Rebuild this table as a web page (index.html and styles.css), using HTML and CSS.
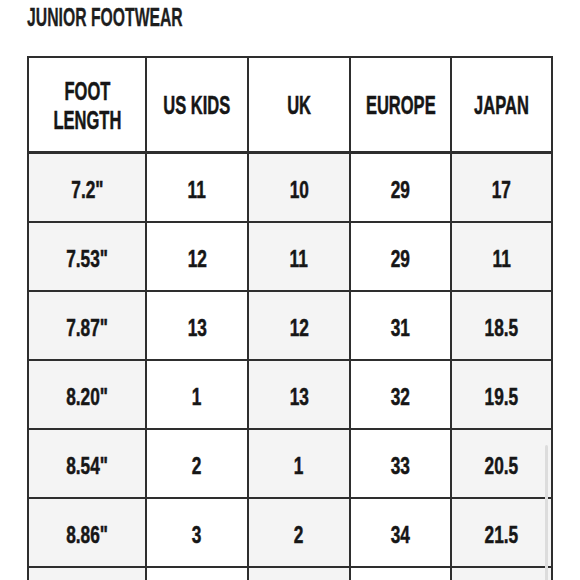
FILE: index.html
```html
<!DOCTYPE html>
<html lang="en">
<head>
<meta charset="utf-8">
<title>Junior Footwear</title>
<link rel="stylesheet" href="styles.css">
</head>
<body>
<div class="page">
  <h1 class="title"><span class="cond">JUNIOR FOOTWEAR</span></h1>
  <div class="chart">
    <div class="cell head"><span class="cond">FOOT<br>LENGTH</span></div>
    <div class="cell head"><span class="cond">US KIDS</span></div>
    <div class="cell head"><span class="cond">UK</span></div>
    <div class="cell head"><span class="cond">EUROPE</span></div>
    <div class="cell head"><span class="cond">JAPAN</span></div>

    <div class="cell shade"><span class="cond">7.2"</span></div>
    <div class="cell"><span class="cond">11</span></div>
    <div class="cell shade"><span class="cond">10</span></div>
    <div class="cell"><span class="cond">29</span></div>
    <div class="cell shade"><span class="cond">17</span></div>

    <div class="cell shade"><span class="cond">7.53"</span></div>
    <div class="cell"><span class="cond">12</span></div>
    <div class="cell shade"><span class="cond">11</span></div>
    <div class="cell"><span class="cond">29</span></div>
    <div class="cell shade"><span class="cond">11</span></div>

    <div class="cell shade"><span class="cond">7.87"</span></div>
    <div class="cell"><span class="cond">13</span></div>
    <div class="cell shade"><span class="cond">12</span></div>
    <div class="cell"><span class="cond">31</span></div>
    <div class="cell shade"><span class="cond">18.5</span></div>

    <div class="cell shade"><span class="cond">8.20"</span></div>
    <div class="cell"><span class="cond">1</span></div>
    <div class="cell shade"><span class="cond">13</span></div>
    <div class="cell"><span class="cond">32</span></div>
    <div class="cell shade"><span class="cond">19.5</span></div>

    <div class="cell shade"><span class="cond">8.54"</span></div>
    <div class="cell"><span class="cond">2</span></div>
    <div class="cell shade"><span class="cond">1</span></div>
    <div class="cell"><span class="cond">33</span></div>
    <div class="cell shade"><span class="cond">20.5</span></div>

    <div class="cell shade"><span class="cond">8.86"</span></div>
    <div class="cell"><span class="cond">3</span></div>
    <div class="cell shade"><span class="cond">2</span></div>
    <div class="cell"><span class="cond">34</span></div>
    <div class="cell shade"><span class="cond">21.5</span></div>

    <div class="cell shade"></div>
    <div class="cell"></div>
    <div class="cell shade"></div>
    <div class="cell"></div>
    <div class="cell shade"></div>
  </div>
  <div class="scroll-thumb"></div>
</div>
</body>
</html>
```

FILE: styles.css
```css
html, body {
  margin: 0;
  padding: 0;
  background: #fff;
}

.page {
  position: relative;
  width: 580px;
  height: 580px;
  overflow: hidden;
  padding-left: 27px;
  box-sizing: border-box;
  font-family: "Liberation Sans", Arial, sans-serif;
  color: #161616;
}

.title {
  margin: 0;
  padding-top: 2px;
  height: 54px;
  font-size: 25px;
  font-weight: bold;
  line-height: 30px;
  color: #1e1e1e;
}

.cond {
  display: inline-block;
  white-space: nowrap;
  transform: scaleX(0.72);
  -webkit-text-stroke: 0.5px currentColor;
}

.title .cond {
  transform: scaleX(0.63);
  transform-origin: left center;
  -webkit-text-stroke: 0.3px currentColor;
}

.chart {
  display: grid;
  grid-template-columns: 116px 100px 100px 99px 99px;
  grid-auto-rows: 67px;
  grid-template-rows: 94px;
  gap: 2px;
  padding: 2px;
  width: max-content;
  background: #2e2e2e;
}

.cell {
  display: flex;
  align-items: center;
  justify-content: center;
  text-align: center;
  background: #fff;
  font-size: 24px;
  font-weight: bold;
  line-height: 28px;
  padding-top: 4px;
  box-sizing: border-box;
}

.head {
  font-size: 25px;
  line-height: 29px;
  border-bottom: 1px solid #2e2e2e;
  padding-top: 2px;
}

.head .cond {
  transform: scaleX(0.66);
}

.shade {
  background: #f4f4f4;
}

.scroll-thumb {
  position: absolute;
  left: 545px;
  top: 445px;
  width: 3px;
  height: 140px;
  border-radius: 2px;
  background: #dcdcdc;
}
```
